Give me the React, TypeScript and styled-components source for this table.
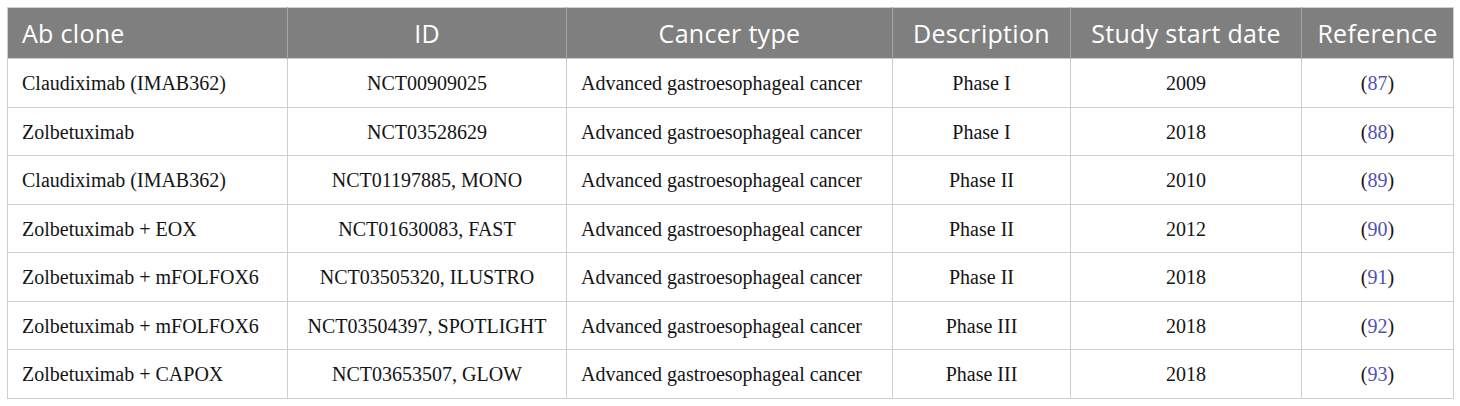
import React from "react";
import styled, { createGlobalStyle } from "styled-components";

const Global = createGlobalStyle`
  html, body { margin: 0; padding: 0; background: #ffffff; }
  body { padding: 7px 0 0 7px; }
`;

const Table = styled.table`
  border-collapse: collapse;
  table-layout: fixed;
  width: 1446px;
  border: 1px solid #cfcfcf;
`;

const HeadRow = styled.tr`
  height: 51px;
  background: #7f7f7f;
`;

const HeadCell = styled.th<{ $align?: "left" | "center" }>`
  font-family: "Open Sans", "Noto Sans", sans-serif;
  font-weight: 400;
  font-size: 25px;
  letter-spacing: 0.3px;
  color: #ffffff;
  text-align: ${(p) => p.$align ?? "center"};
  padding: 0 14px;
  border-left: 1px solid #a5a5a5;
  &:first-child { border-left: none; }
  white-space: nowrap;
`;

const Row = styled.tr`
  height: 48.5px;
`;

const Cell = styled.td<{ $align?: "left" | "center" }>`
  font-family: "Liberation Serif", "Times New Roman", serif;
  font-size: 20px;
  color: #141414;
  text-align: ${(p) => p.$align ?? "center"};
  padding: 2px 14px 0;
  border: 1px solid #cfcfcf;
  white-space: nowrap;
`;

const RefLink = styled.span`
  color: #5252ad;
`;

const cols = [280, 279, 326, 178, 231, 152];

const headers: { label: string; align: "left" | "center" }[] = [
  { label: "Ab clone", align: "left" },
  { label: "ID", align: "center" },
  { label: "Cancer type", align: "center" },
  { label: "Description", align: "center" },
  { label: "Study start date", align: "center" },
  { label: "Reference", align: "center" },
];

const rows = [
  ["Claudiximab (IMAB362)", "NCT00909025", "Advanced gastroesophageal cancer", "Phase I", "2009", "87"],
  ["Zolbetuximab", "NCT03528629", "Advanced gastroesophageal cancer", "Phase I", "2018", "88"],
  ["Claudiximab (IMAB362)", "NCT01197885, MONO", "Advanced gastroesophageal cancer", "Phase II", "2010", "89"],
  ["Zolbetuximab + EOX", "NCT01630083, FAST", "Advanced gastroesophageal cancer", "Phase II", "2012", "90"],
  ["Zolbetuximab + mFOLFOX6", "NCT03505320, ILUSTRO", "Advanced gastroesophageal cancer", "Phase II", "2018", "91"],
  ["Zolbetuximab + mFOLFOX6", "NCT03504397, SPOTLIGHT", "Advanced gastroesophageal cancer", "Phase III", "2018", "92"],
  ["Zolbetuximab + CAPOX", "NCT03653507, GLOW", "Advanced gastroesophageal cancer", "Phase III", "2018", "93"],
];

export default function App() {
  return (
    <>
      <Global />
      <Table>
        <colgroup>
          {cols.map((w, i) => (
            <col key={i} style={{ width: w }} />
          ))}
        </colgroup>
        <thead>
          <HeadRow>
            {headers.map((h) => (
              <HeadCell key={h.label} $align={h.align}>
                {h.label}
              </HeadCell>
            ))}
          </HeadRow>
        </thead>
        <tbody>
          {rows.map((r, i) => (
            <Row key={i}>
              <Cell $align="left">{r[0]}</Cell>
              <Cell>{r[1]}</Cell>
              <Cell $align="left">{r[2]}</Cell>
              <Cell>{r[3]}</Cell>
              <Cell>{r[4]}</Cell>
              <Cell>
                (<RefLink>{r[5]}</RefLink>)
              </Cell>
            </Row>
          ))}
        </tbody>
      </Table>
    </>
  );
}
